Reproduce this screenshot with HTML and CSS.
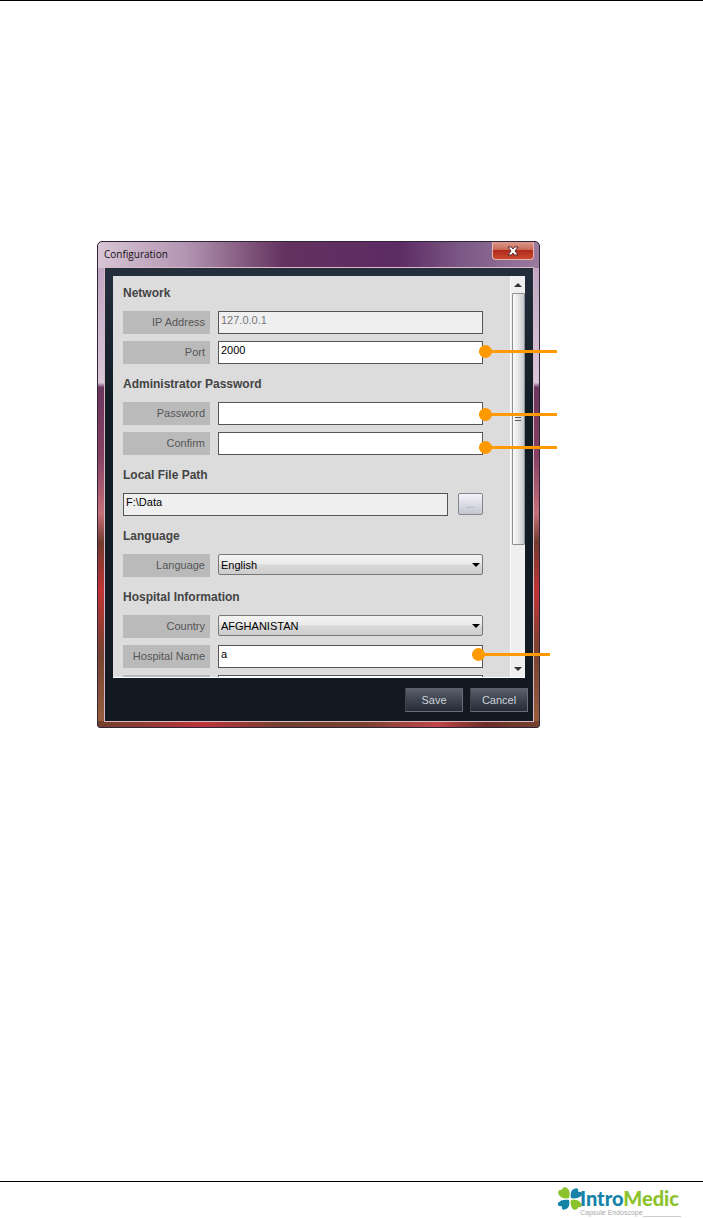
FILE: index.html
```
<!DOCTYPE html>
<html lang="en">
<head>
<meta charset="UTF-8">
<meta name="viewport" content="width=device-width, initial-scale=1.0">
<title>Configuration</title>
<link rel="stylesheet" href="styles.css">
</head>
<body>
<main class="page">
    <div class="dialog">
        <div class="titlebar">
            <h1 class="title">Configuration</h1>
            <button class="close" type="button" aria-label="Close">
                <svg width="12" height="10" viewBox="0 0 12 10"><path d="M1 1h3.500L6 3l1.500-2H11L8 5l3 4H7.500L6 7 4.500 9H1l3-4z" fill="#fff" stroke="#5b2a30" stroke-width="1"/></svg>
            </button>
        </div>
        <form class="client">
            <div class="panel">
                <div class="fields">
                    <section class="group">
                        <h2>Network</h2>
                        <div class="row">
                            <label for="ip">IP Address</label>
                            <input type="text" id="ip" value="127.0.0.1" disabled>
                        </div>
                        <div class="row">
                            <label for="port">Port</label>
                            <input type="text" id="port" value="2000">
                        </div>
                    </section>
                    <section class="group">
                        <h2>Administrator Password</h2>
                        <div class="row">
                            <label for="password">Password</label>
                            <input type="password" id="password">
                        </div>
                        <div class="row">
                            <label for="confirm">Confirm</label>
                            <input type="password" id="confirm">
                        </div>
                    </section>
                    <section class="group">
                        <h2 id="path-title">Local File Path</h2>
                        <div class="row path">
                            <input type="text" id="path" value="F:\Data" aria-labelledby="path-title" readonly>
                            <button class="browse" type="button">...</button>
                        </div>
                    </section>
                    <section class="group">
                        <h2>Language</h2>
                        <div class="row">
                            <label for="language">Language</label>
                            <select id="language"><option>English</option></select>
                        </div>
                    </section>
                    <section class="group">
                        <h2>Hospital Information</h2>
                        <div class="row">
                            <label for="country">Country</label>
                            <select id="country"><option>AFGHANISTAN</option></select>
                        </div>
                        <div class="row">
                            <label for="hospital">Hospital Name</label>
                            <input type="text" id="hospital" value="a">
                        </div>
                        <div class="row">
                            <span class="blank"></span>
                            <input type="text" aria-label="Address">
                        </div>
                    </section>
                </div>
                <div class="scrollbar">
                    <svg class="arrow" width="8" height="4" viewBox="0 0 8 4"><path d="M0 4l4-4 4 4z" fill="#333"/></svg>
                    <div class="thumb"><span class="grip"></span></div>
                    <svg class="arrow" width="8" height="4" viewBox="0 0 8 4"><path d="M0 0h8L4 4z" fill="#333"/></svg>
                </div>
            </div>
            <div class="actions">
                <button class="action" type="submit">Save</button>
                <button class="action" type="button">Cancel</button>
            </div>
        </form>
        <span class="callout callout-port"></span>
        <span class="callout callout-password"></span>
        <span class="callout callout-confirm"></span>
        <span class="callout callout-hospital"></span>
    </div>
</main>
<footer class="footer">
    <svg class="clover" width="26" height="24" viewBox="0 0 26 24">
        <path d="M12 11C8 12 4 11 2 8 0 5 2 2 5 3c0-3 4-4 6-1 2 2 2 6 1 9z" fill="#8cc32c"/>
        <path d="M14 11c-1-4 0-8 3-9 3-2 5 0 4 3 3-1 5 1 4 3-2 3-7 4-11 3z" fill="#1583a8"/>
        <path d="M12 13c1 4 0 8-3 9-3 2-5 0-4-3-3 1-5-1-4-3 2-3 7-4 11-3z" fill="#1583a8"/>
        <path d="M14 13c4-1 8 0 10 3 2 3 0 5-3 4 0 3-4 4-6 1-1-2-2-5-1-8z" fill="#8cc32c"/>
    </svg>
    <div class="brand">
        <div class="name">Intro<span>Medic</span></div>
        <div class="tagline">Capsule Endoscope</div>
    </div>
</footer>
</body>
</html>
```
FILE: styles.css
```
* {
    box-sizing: border-box;
}
body {
    margin: 0;
    min-height: 100vh;
    display: flex;
    flex-direction: column;
    border-top: 1px solid #000;
    background-color: #fff;
    font-family: "Liberation Sans", Arial, sans-serif;
    font-size: 11px;
}
input, select, button {
    font-family: inherit;
    font-size: 11px;
}
.page {
    flex: 1;
    padding: 240px 163px 40px 97px;
}

/* window frame */
.dialog {
    position: relative;
    padding: 0 5px 5px 6px;
    border-radius: 5px 5px 3px 3px;
    background:
        linear-gradient(90deg, #d8c5d5 0, #b295b1 20%, #64325f 42%, #5c2b63 68%, #7b5785 82%, #9c7b9f 100%) top / 100% 26px no-repeat,
        linear-gradient(90deg, #71412b, #bb3538 24%, #70402c 42%, #78412d 60%, #c14747 77%, #682c24 88%, #76442f) bottom / 100% 6px no-repeat,
        linear-gradient(#bca0bd 0, #d9c7d9 29%, #6c365e 30%, #874163 44%, #c66f79 56%, #733b2c 62%, #c23334 72%, #76442f 85%, #9b6040 100%);
    border: 1px solid #30243c;
}
.titlebar {
    height: 25px;
    display: flex;
    justify-content: space-between;
    align-items: flex-start;
}
.title {
    margin: 0;
    font-family: "Open Sans", sans-serif;
    font-size: 10px;
    font-weight: normal;
    line-height: 25px;
    color: #161018;
}
.close {
    width: 42px;
    height: 18px;
    padding: 0;
    display: flex;
    align-items: center;
    justify-content: center;
    border: 1px solid #e6b5ae;
    border-top: 0;
    border-radius: 0 0 4px 4px;
    background: linear-gradient(#d99a8c 0, #c96a58 45%, #b02a1c 50%, #c94a30 100%);
}
.client {
    padding: 8px 5px 9px 8px;
    border: 1px solid #d9b9c5;
    background: linear-gradient(#252e3d, #101c24 30%, #131921);
}

/* scrolling panel */
.panel {
    height: 402px;
    display: flex;
    overflow: hidden;
    margin-right: 3px;
    background-color: #dcdcdc;
    border-bottom: 1px solid #fff;
}
.fields {
    flex: 1;
    padding: 8px 27px 0 10px;
}
.group {
    margin-bottom: 11px;
}
.group h2 {
    margin: 0 0 9px;
    font-size: 12px;
    line-height: 18px;
    color: #444;
}
.row {
    position: relative;
    display: flex;
    gap: 8px;
    height: 23px;
    margin-bottom: 7px;
}
.row:last-child {
    margin-bottom: 0;
}
.row label, .blank {
    width: 87px;
    padding-right: 5px;
    background-color: #bababa;
    color: #555;
    line-height: 23px;
    text-align: right;
}
.row input {
    flex: 1;
    min-width: 0;
    padding: 0 2px 5px;
    border: 1px solid #555;
    border-radius: 0;
    background-color: #fff;
    color: #000;
}
.row input:disabled {
    background-color: #efefef;
    color: #777;
}
.row input:read-only {
    background-color: #efefef;
}
.row select {
    flex: 1;
    height: 21px;
    padding: 0 2px;
    appearance: none;
    border: 1px solid #777;
    border-radius: 2px;
    color: #000;
    background: linear-gradient(#f4f4f4, #e9e9e9 48%, #d9d9d9 52%, #cdcdcd);
}
.row:has(select)::after {
    content: "";
    position: absolute;
    right: 3px;
    top: 9px;
    border: 4px solid transparent;
    border-top-color: #000;
    border-bottom: 0;
    pointer-events: none;
}
.path {
    gap: 10px;
}
.browse {
    width: 25px;
    height: 22px;
    padding: 0;
    border: 1px solid #85858f;
    border-radius: 2px;
    background: linear-gradient(#f3f3f7, #c3c5d2);
    color: #999;
}
.scrollbar {
    width: 15px;
    display: flex;
    flex-direction: column;
    align-items: center;
    border-left: 1px solid #fafafa;
    background-color: #efefef;
}
.arrow {
    margin: 7px 0 6px;
}
.thumb {
    width: 13px;
    height: 252px;
    margin-bottom: auto;
    display: flex;
    align-items: center;
    justify-content: center;
    border: 1px solid #8d8f94;
    border-radius: 1px;
    background: linear-gradient(90deg, #fafafa, #e6e6e6 50%, #c4c7cc);
}
.grip {
    width: 6px;
    height: 4px;
    border: solid #555;
    border-width: 1px 0;
}

.actions {
    display: flex;
    justify-content: flex-end;
    gap: 7px;
    padding-top: 10px;
}
.action {
    width: 58px;
    height: 24px;
    padding: 0;
    border: 1px solid #4c535e;
    border-color: #5a616d #666d78 #666d78 #3d444f;
    background: linear-gradient(#59606c, #3d444f 50%, #272d37);
    color: #ccd0d8;
}

/* orange pointers */
.callout {
    position: absolute;
    right: -18px;
    width: 78px;
    height: 13px;
    background: linear-gradient(#f90, #f90) center / 100% 3px no-repeat;
}
.callout::before {
    content: "";
    display: block;
    width: 13px;
    height: 13px;
    border-radius: 50%;
    background-color: #f90;
}
.callout-port {
    top: 103px;
}
.callout-password {
    top: 166px;
}
.callout-confirm {
    top: 199px;
}
.callout-hospital {
    top: 406px;
    right: -11px;
}

.footer {
    height: 37px;
    display: flex;
    align-items: flex-start;
    justify-content: flex-end;
    padding: 5px 22px 0 0;
    border-top: 1px solid #000;
}
.brand {
    width: 101px;
    margin-left: -3px;
}
.name {
    font-family: Lato, sans-serif;
    font-size: 20px;
    font-weight: 900;
    line-height: 22px;
    color: #1583a8;
}
.name span {
    color: #8cc32c;
}
.tagline {
    display: flex;
    align-items: flex-end;
    font-size: 7px;
    line-height: 8px;
    color: #aaa;
}
.tagline::after {
    content: "";
    flex: 1;
    border-bottom: 1px solid #ccc;
}
```
